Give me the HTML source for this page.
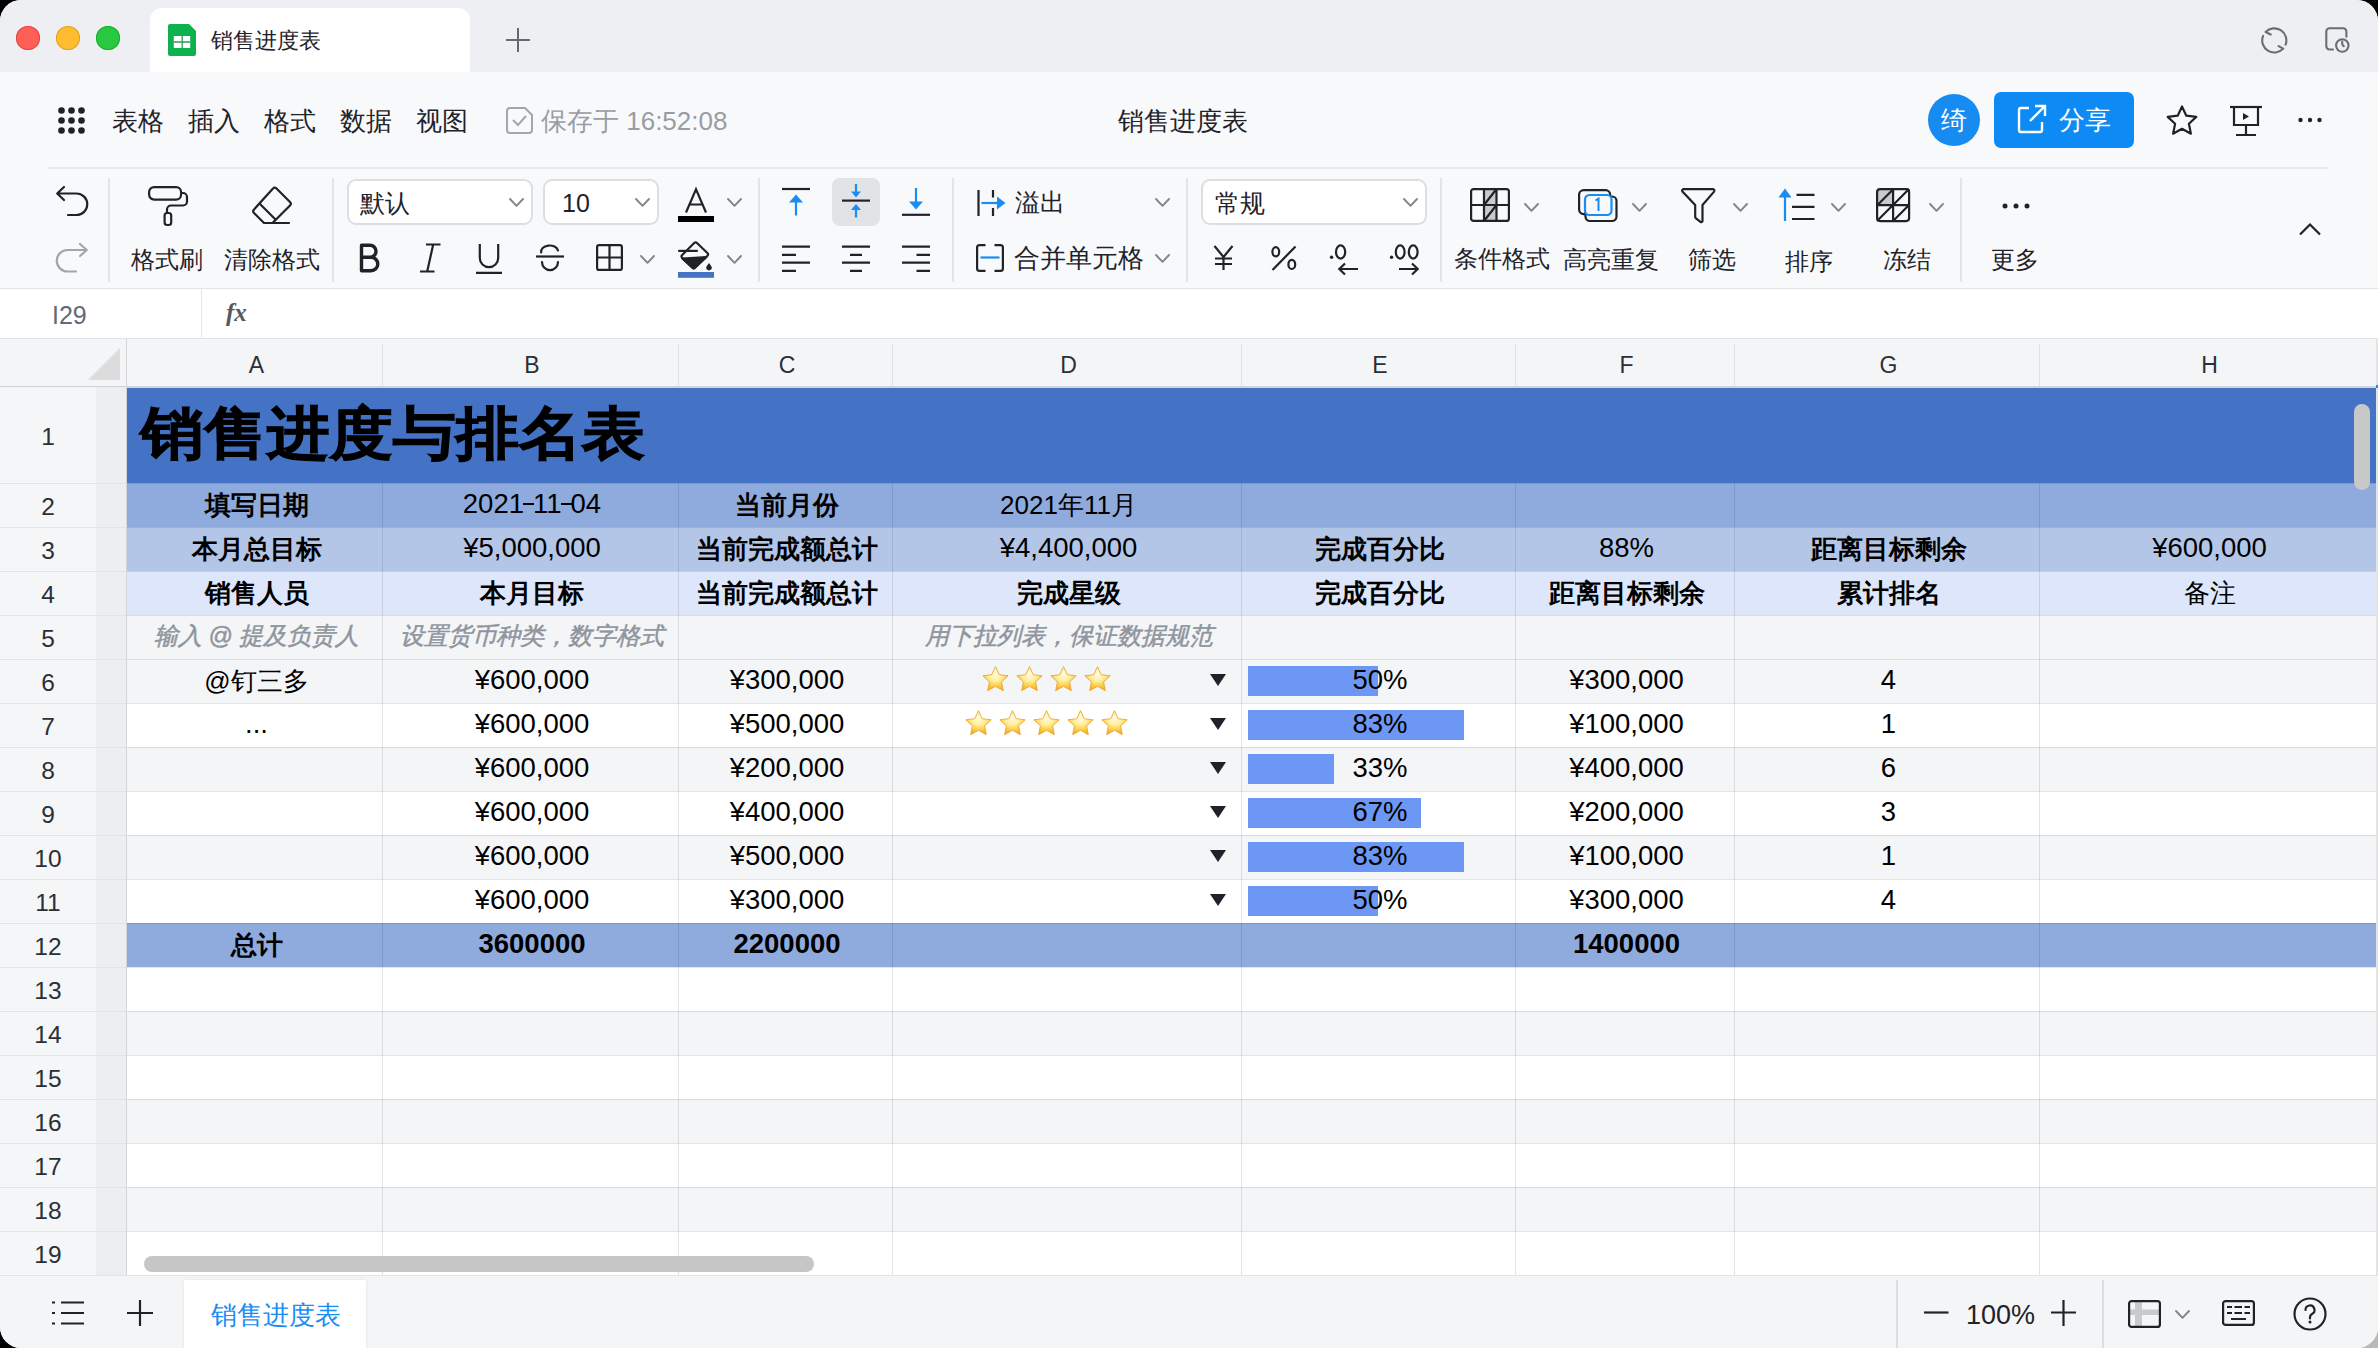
<!DOCTYPE html><html><head><meta charset="utf-8"><style>
*{box-sizing:border-box;margin:0;padding:0}
html,body{width:2378px;height:1348px;overflow:hidden;background:#000}
body{position:relative;font-family:"Liberation Sans",sans-serif;color:#1f2329}
.a{position:absolute}
.t{position:absolute;white-space:nowrap;line-height:1}
svg{position:absolute;overflow:visible}
#win{position:absolute;left:0;top:0;width:2378px;height:1348px;border-radius:21px;overflow:hidden;background:#f8f9fb}
.c{position:absolute;display:flex;align-items:center;justify-content:center;white-space:nowrap;line-height:1;font-size:26px;color:#000}
.b{font-weight:bold}
.vl{position:absolute;width:1px;background:rgba(0,0,0,0.1)}
.hl{position:absolute;height:1px;background:rgba(0,0,0,0.1)}
</style></head><body>
<div class="a" style="right:0;bottom:0;width:30px;height:30px;background:#b9b9b9"></div>
<svg width="0" height="0" style="position:absolute"><defs><radialGradient id="sg" cx="0.5" cy="0.32" r="0.75"><stop offset="0" stop-color="#fffbe0"/><stop offset="0.35" stop-color="#fff1a0"/><stop offset="0.7" stop-color="#fcc63a"/><stop offset="1" stop-color="#f29a12"/></radialGradient></defs></svg>
<div id="win">
<div class="a" style="left:0;top:0;width:2378px;height:72px;background:#eeeff3"></div>
<div class="a" style="left:16px;top:26px;width:24px;height:24px;border-radius:50%;background:#ff5f57;box-shadow:inset 0 0 0 1px #e2463f"></div>
<div class="a" style="left:56px;top:26px;width:24px;height:24px;border-radius:50%;background:#febc2e;box-shadow:inset 0 0 0 1px #e1a325"></div>
<div class="a" style="left:96px;top:26px;width:24px;height:24px;border-radius:50%;background:#28c840;box-shadow:inset 0 0 0 1px #1aab29"></div>
<div class="a" style="left:150px;top:8px;width:320px;height:64px;background:#fff;border-radius:12px 12px 0 0"></div>
<svg style="left:168px;top:24px" width="28" height="32" viewBox="0 0 28 32"><path d="M2 0H21L28 7V30a2 2 0 0 1-2 2H2a2 2 0 0 1-2-2V2a2 2 0 0 1 2-2z" fill="#0db24f"/><rect x="5.8" y="12" width="16.4" height="12" fill="#fff"/><path d="M14.2 12V24M5.8 18H22.2" stroke="#2e9b5a" stroke-width="1.3"/></svg>
<div class="t" style="left:211px;top:30px;font-size:22px;color:#1f2329">销售进度表</div>
<svg style="left:506px;top:28px" width="24" height="24" viewBox="0 0 24 24"><path d="M12 0V24M0 12H24" stroke="#646a73" stroke-width="2"/></svg>
<svg style="left:2250px;top:20px" width="50" height="40" viewBox="2250 20 50 40" fill="none" stroke="#6a6e73" stroke-width="2.1" stroke-linecap="round"><path d="M2265.6 32A12.1 12.1 0 0 1 2285.6 44.7M2283.2 48.65A12.1 12.1 0 0 1 2263.1 35.9M2265.6 32L2270.7 34.5M2283.2 48.65L2278.6 46.1"/></svg>
<svg style="left:2310px;top:20px" width="50" height="40" viewBox="2310 20 50 40" fill="none" stroke="#6a6e73" stroke-width="2.1" stroke-linecap="round"><path d="M2333 49.5H2329.5a3.2 3.2 0 0 1-3.2-3.2V31.4a3.2 3.2 0 0 1 3.2-3.2H2343.2a3.2 3.2 0 0 1 3.2 3.2V36.7"/><circle cx="2342.3" cy="45.5" r="6.2"/><path d="M2342.2 41.5V43.5a3 3 0 0 0 1.6 2.6"/></svg>
<svg style="left:58px;top:107px" width="27" height="27" viewBox="0 0 27 27"><circle cx="3.5" cy="3.5" r="3.3" fill="#1f2329"/><circle cx="3.5" cy="13.5" r="3.3" fill="#1f2329"/><circle cx="3.5" cy="23.5" r="3.3" fill="#1f2329"/><circle cx="13.5" cy="3.5" r="3.3" fill="#1f2329"/><circle cx="13.5" cy="13.5" r="3.3" fill="#1f2329"/><circle cx="13.5" cy="23.5" r="3.3" fill="#1f2329"/><circle cx="23.5" cy="3.5" r="3.3" fill="#1f2329"/><circle cx="23.5" cy="13.5" r="3.3" fill="#1f2329"/><circle cx="23.5" cy="23.5" r="3.3" fill="#1f2329"/></svg>
<div class="t" style="left:112px;top:108px;font-size:26px;color:#1f2329">表格</div>
<div class="t" style="left:188px;top:108px;font-size:26px;color:#1f2329">插入</div>
<div class="t" style="left:264px;top:108px;font-size:26px;color:#1f2329">格式</div>
<div class="t" style="left:340px;top:108px;font-size:26px;color:#1f2329">数据</div>
<div class="t" style="left:416px;top:108px;font-size:26px;color:#1f2329">视图</div>
<svg style="left:506px;top:107px" width="27" height="27" viewBox="0 0 27 27" fill="none" stroke="#a3a6ab" stroke-width="2"><path d="M19 1H4a3 3 0 0 0-3 3v19a3 3 0 0 0 3 3h19a3 3 0 0 0 3-3V8z"/><path d="M7 13l5 5 8-9"/></svg>
<div class="t" style="left:541px;top:108px;font-size:26px;color:#999da3">保存于 16:52:08</div>
<div class="t" style="left:1118px;top:108px;font-size:26px;color:#1f2329">销售进度表</div>
<div class="a" style="left:1928px;top:94px;width:52px;height:52px;border-radius:50%;background:#168bf2"></div>
<div class="t" style="left:1941px;top:107px;font-size:26px;color:#fff">绮</div>
<div class="a" style="left:1994px;top:92px;width:140px;height:56px;border-radius:7px;background:#0d8af3"></div>
<svg style="left:2018px;top:104px" width="29" height="29" viewBox="0 0 29 29" fill="none" stroke="#fff" stroke-width="2.4"><path d="M11 4H3a2 2 0 0 0-2 2v20a2 2 0 0 0 2 2h19a2 2 0 0 0 2-2v-8"/><path d="M12 17L27 2M17 2h10v10"/></svg>
<div class="t" style="left:2059px;top:107px;font-size:26px;color:#fff">分享</div>
<svg style="left:2166px;top:105px" width="32" height="31" viewBox="0 0 32 31" fill="none" stroke="#1f2329" stroke-width="2.2" stroke-linejoin="round"><path d="M16 1.5l4.3 9.2 10 1.2-7.4 6.9 2 9.9L16 23.8l-8.9 4.9 2-9.9L1.7 11.9l10-1.2z"/></svg>
<svg style="left:2230px;top:106px" width="32" height="30" viewBox="0 0 32 30" fill="none" stroke="#1f2329" stroke-width="2.2"><path d="M0 1H32"/><path d="M4 1V19H28V1"/><path d="M16 19V29M6 29H26"/><path d="M13 7l6 3.5-6 3.5z" fill="#1f2329" stroke="none"/></svg>
<svg style="left:2297px;top:117px" width="26" height="6" viewBox="0 0 26 6"><circle cx="3.5" cy="3" r="2.2" fill="#1f2329"/><circle cx="13" cy="3" r="2.2" fill="#1f2329"/><circle cx="22.5" cy="3" r="2.2" fill="#1f2329"/></svg>
<div class="a" style="left:48px;top:167px;width:2281px;height:2px;background:#e9eaed"></div>
<div class="a" style="left:108px;top:178px;width:2px;height:104px;background:#e3e4e7"></div>
<div class="a" style="left:332px;top:178px;width:2px;height:104px;background:#e3e4e7"></div>
<div class="a" style="left:758px;top:178px;width:2px;height:104px;background:#e3e4e7"></div>
<div class="a" style="left:952px;top:178px;width:2px;height:104px;background:#e3e4e7"></div>
<div class="a" style="left:1186px;top:178px;width:2px;height:104px;background:#e3e4e7"></div>
<div class="a" style="left:1440px;top:178px;width:2px;height:104px;background:#e3e4e7"></div>
<div class="a" style="left:1960px;top:178px;width:2px;height:104px;background:#e3e4e7"></div>
<svg style="left:56px;top:186px" width="32" height="30" viewBox="0 0 32 30" fill="none" stroke="#1f2329" stroke-width="2.2" stroke-linecap="round" stroke-linejoin="round"><path d="M8 1L1.2 7.5L8 14M1.2 7.5H20.5A10.75 10.75 0 0 1 20.5 29H12"/></svg>
<svg style="left:56px;top:243px" width="32" height="30" viewBox="0 0 32 30" fill="none" stroke="#a2a5aa" stroke-width="2.2" stroke-linecap="round" stroke-linejoin="round"><path d="M24 1L30.8 7L24 13M30.8 7H11.5A10.75 10.75 0 0 0 11.5 28.5H20"/></svg>
<svg style="left:148px;top:186px" width="40" height="40" viewBox="0 0 40 40" fill="none" stroke="#1f2329" stroke-width="2.2" stroke-linejoin="round"><rect x="1.1" y="1.1" width="32" height="12.5" rx="5"/><path d="M33.1 7H35a4 4 0 0 1 4 4v4.5a4 4 0 0 1-4 4H23a4 4 0 0 0-4 4V27"/><rect x="16.6" y="27" width="6.6" height="12" rx="2.5"/></svg>
<div class="t" style="left:131px;top:248px;font-size:24px;color:#1f2329">格式刷</div>
<svg style="left:252px;top:187px" width="40" height="38" viewBox="0 0 40 38" fill="none" stroke="#1f2329" stroke-width="2.2" stroke-linejoin="round" stroke-linecap="round"><path d="M21 1.5a2.5 2.5 0 0 1 3.5 0L38 15a2.5 2.5 0 0 1 0 3.5L20.5 36H12L2 26a2.5 2.5 0 0 1 0-3.5z"/><path d="M8 17L23 32"/><path d="M20.5 36H37"/></svg>
<div class="t" style="left:224px;top:248px;font-size:24px;color:#1f2329">清除格式</div>
<div class="a" style="left:347px;top:179px;width:186px;height:46px;background:#fff;border:2px solid #dddee1;border-radius:9px"></div>
<div class="a" style="left:543px;top:179px;width:116px;height:46px;background:#fff;border:2px solid #dddee1;border-radius:9px"></div>
<div class="a" style="left:1201px;top:179px;width:226px;height:46px;background:#fff;border:2px solid #dddee1;border-radius:9px"></div>
<div class="t" style="left:360px;top:191px;font-size:25px;color:#1f2329">默认</div>
<svg style="left:509px;top:198px" width="15" height="9" viewBox="0 0 15 9" fill="none" stroke="#80858b" stroke-width="1.9" stroke-linecap="round" stroke-linejoin="round"><path d="M1 1L7.5 7.8L14 1"/></svg>
<div class="t" style="left:562px;top:191px;font-size:25px;color:#1f2329">10</div>
<svg style="left:635px;top:198px" width="15" height="9" viewBox="0 0 15 9" fill="none" stroke="#80858b" stroke-width="1.9" stroke-linecap="round" stroke-linejoin="round"><path d="M1 1L7.5 7.8L14 1"/></svg>
<div class="t" style="left:1215px;top:191px;font-size:25px;color:#1f2329">常规</div>
<svg style="left:1403px;top:198px" width="15" height="9" viewBox="0 0 15 9" fill="none" stroke="#80858b" stroke-width="1.9" stroke-linecap="round" stroke-linejoin="round"><path d="M1 1L7.5 7.8L14 1"/></svg>
<svg style="left:678px;top:188px" width="36" height="34" viewBox="0 0 36 34" fill="none" stroke="#1f2329" stroke-width="2.2"><path d="M8 24.5L18 1.2L28 24.5M11.5 16.5H24.5"/><rect x="0" y="28" width="36" height="6" fill="#000" stroke="none"/></svg>
<svg style="left:727px;top:198px" width="15" height="9" viewBox="0 0 15 9" fill="none" stroke="#80858b" stroke-width="1.9" stroke-linecap="round" stroke-linejoin="round"><path d="M1 1L7.5 7.8L14 1"/></svg>
<svg style="left:359px;top:243px" width="22" height="30" viewBox="0 0 22 30" fill="none" stroke="#1f2329" stroke-width="3.4" stroke-linejoin="round"><path d="M2.5 2.2H11a6 6 0 0 1 0 12H2.5zM2.5 14.2H12a6.8 6.8 0 0 1 0 13.6H2.5z"/></svg>
<svg style="left:420px;top:243px" width="21" height="30" viewBox="0 0 21 30" fill="none" stroke="#1f2329" stroke-width="2.2"><path d="M6 1.5H20.5M0 28.5H14.5M13.2 1.5L7.2 28.5"/></svg>
<svg style="left:476px;top:243px" width="26" height="31" viewBox="0 0 26 31" fill="none" stroke="#1f2329" stroke-width="2.2"><path d="M3.8 1V15a9.2 9.2 0 0 0 18.4 0V1M0 29.8H26"/></svg>
<svg style="left:536px;top:244px" width="28" height="29" viewBox="0 0 28 29" fill="none" stroke="#1f2329" stroke-width="2.2" stroke-linecap="round"><path d="M22 6.5A8.5 6 0 0 0 5.2 8.5"/><path d="M6 18a8 8.2 0 1 0 16 0"/><path d="M0 12.5H28" stroke-linecap="butt"/></svg>
<svg style="left:596px;top:244px" width="27" height="27" viewBox="0 0 27 27" fill="none" stroke="#1f2329" stroke-width="2.2"><rect x="1.1" y="1.1" width="24.8" height="24.8" rx="2"/><path d="M13.5 1V26M1 13.5H26"/></svg>
<svg style="left:640px;top:255px" width="15" height="9" viewBox="0 0 15 9" fill="none" stroke="#80858b" stroke-width="1.9" stroke-linecap="round" stroke-linejoin="round"><path d="M1 1L7.5 7.8L14 1"/></svg>
<svg style="left:678px;top:240px" width="36" height="38" viewBox="0 0 36 38" fill="none" stroke="#1f2329" stroke-width="2.2" stroke-linejoin="round"><path d="M0.2 10.9H19.8"/><path d="M16.2 3a2 2 0 0 1 2.8 0L29.4 13a2 2 0 0 1 0 2.8L17.1 27.6a2 2 0 0 1-2.8 0L4.2 17.9a2 2 0 0 1 0-2.8z"/><path d="M4.5 18.6L28.3 17.2L15.7 28.5z" fill="#1f2329"/><path d="M31 23c-1.6 2.2-2.8 3.3-2.8 4.6a2.8 2.8 0 0 0 5.6 0c0-1.3-1.2-2.4-2.8-4.6z" fill="#1f2329" stroke="none"/><rect x="0" y="32" width="36" height="5.8" fill="#4472c4" stroke="none"/></svg>
<svg style="left:727px;top:255px" width="15" height="9" viewBox="0 0 15 9" fill="none" stroke="#80858b" stroke-width="1.9" stroke-linecap="round" stroke-linejoin="round"><path d="M1 1L7.5 7.8L14 1"/></svg>
<div class="a" style="left:832px;top:178px;width:48px;height:48px;border-radius:8px;background:#e2e3e6"></div>
<svg style="left:782px;top:184px" width="150" height="40" viewBox="0 0 150 40" fill="none" stroke-width="2.2"><path d="M0 5H28" stroke="#1f2329"/><path d="M14 17V31.5" stroke="#1a8cf2"/><path d="M7 18.5L14 10.5L21 18.5z" fill="#1a8cf2" /><path d="M60 16.6H88" stroke="#1f2329"/><path d="M74 0V8.5M74 23V33.5" stroke="#1a8cf2"/><path d="M69 7.5L74 13.5L79 7.5zM69 26L74 20L79 26z" fill="#1a8cf2"/><path d="M120 30.8H148" stroke="#1f2329"/><path d="M134 4V18" stroke="#1a8cf2"/><path d="M127 17.5L134 25.5L141 17.5z" fill="#1a8cf2"/></svg>
<svg style="left:782px;top:240px" width="150" height="34" viewBox="782 0 150 34" fill="none" stroke="#1f2329" stroke-width="2.2"><path d="M782 6.599999999999994H810M782 14.800000000000011H796M782 22.69999999999999H810M782 30.899999999999977H796M842 6.599999999999994H870M850 14.800000000000011H862M842 22.69999999999999H870M850 30.899999999999977H862M902 6.599999999999994H930M916.5 14.800000000000011H930M902 22.69999999999999H930M916.5 30.899999999999977H930"/></svg>
<svg style="left:977px;top:190px" width="30" height="27" viewBox="0 0 30 27" fill="none" stroke-width="2.2"><path d="M1.5 0V26" stroke="#1f2329"/><path d="M16 0V7.5M16 18V26" stroke="#1f2329"/><path d="M4.5 13H22" stroke="#1a8cf2"/><path d="M20 6.5L28.5 13L20 19.5z" fill="#1a8cf2"/></svg>
<div class="t" style="left:1015px;top:190px;font-size:25px;color:#1f2329">溢出</div>
<svg style="left:1155px;top:198px" width="15" height="9" viewBox="0 0 15 9" fill="none" stroke="#80858b" stroke-width="1.9" stroke-linecap="round" stroke-linejoin="round"><path d="M1 1L7.5 7.8L14 1"/></svg>
<svg style="left:976px;top:244px" width="28" height="28" viewBox="0 0 28 28" fill="none" stroke-width="2.2"><path d="M9.5 1.1H3.5a2.4 2.4 0 0 0-2.4 2.4V24.5a2.4 2.4 0 0 0 2.4 2.4H9.5M18.5 1.1H24.5a2.4 2.4 0 0 1 2.4 2.4V24.5a2.4 2.4 0 0 1-2.4 2.4H18.5" stroke="#1f2329"/><path d="M4.5 13.5H23.5" stroke="#1a8cf2"/></svg>
<div class="t" style="left:1014px;top:246px;font-size:25.5px;color:#1f2329">合并单元格</div>
<svg style="left:1155px;top:254px" width="15" height="9" viewBox="0 0 15 9" fill="none" stroke="#80858b" stroke-width="1.9" stroke-linecap="round" stroke-linejoin="round"><path d="M1 1L7.5 7.8L14 1"/></svg>
<svg style="left:1213px;top:245px" width="21" height="26" viewBox="0 0 21 26" fill="none" stroke="#1f2329" stroke-width="2.2"><path d="M1.5 1L10.5 12L19.5 1M10.5 12V25M2 13.5H19M2 19H19"/></svg>
<svg style="left:1271px;top:245px" width="26" height="26" viewBox="0 0 26 26" fill="none" stroke="#1f2329" stroke-width="2.2"><ellipse cx="4.8" cy="6.8" rx="3.4" ry="4.6"/><ellipse cx="20.8" cy="19.4" rx="3.4" ry="4.6"/><path d="M24.5 1.5L1.5 25"/></svg>
<svg style="left:1329px;top:244px" width="31" height="32" viewBox="0 0 31 32" fill="none" stroke="#1f2329" stroke-width="2.2"><circle cx="2.6" cy="13.2" r="1.7" fill="#1f2329" stroke="none"/><ellipse cx="11.6" cy="8" rx="4.6" ry="6.6"/><path d="M10 25H29M16 19.5L10.3 25L16 30.5"/></svg>
<svg style="left:1389px;top:244px" width="31" height="32" viewBox="0 0 31 32" fill="none" stroke="#1f2329" stroke-width="2.2"><circle cx="2.6" cy="13.2" r="1.7" fill="#1f2329" stroke="none"/><ellipse cx="11.2" cy="8" rx="4.4" ry="6.6"/><ellipse cx="24.2" cy="8" rx="4.4" ry="6.6"/><path d="M10 25H28.5M23 19.5L28.7 25L23 30.5"/></svg>
<svg style="left:1470px;top:188px" width="40" height="34" viewBox="0 0 40 34" fill="none" stroke="#1f2329" stroke-width="2.2"><rect x="14" y="1.5" width="12.5" height="31" fill="#c9cacc" stroke="none"/><rect x="1.1" y="1.1" width="37.8" height="31.8" rx="2.5"/><path d="M14 1V33M26.5 1V33M1 17H39M14 33L26.5 17M14 17L26.5 1"/></svg>
<svg style="left:1524px;top:203px" width="15" height="9" viewBox="0 0 15 9" fill="none" stroke="#80858b" stroke-width="1.9" stroke-linecap="round" stroke-linejoin="round"><path d="M1 1L7.5 7.8L14 1"/></svg>
<div class="t" style="left:1454px;top:247px;font-size:24px;color:#1f2329">条件格式</div>
<svg style="left:1578px;top:189px" width="40" height="33" viewBox="0 0 40 33" fill="none" stroke-width="2.2"><rect x="1.1" y="1.1" width="31" height="24" rx="4.5" stroke="#1f2329"/><rect x="7.5" y="7.5" width="31" height="24.5" rx="4.5" stroke="#1f2329" fill="#f8f9fb"/><rect x="7" y="6" width="26.5" height="20" rx="4.5" stroke="#1a8cf2" fill="#f8f9fb"/><path d="M17.5 11.5L20.5 9.5V22" stroke="#1a8cf2" stroke-width="2"/></svg>
<svg style="left:1632px;top:203px" width="15" height="9" viewBox="0 0 15 9" fill="none" stroke="#80858b" stroke-width="1.9" stroke-linecap="round" stroke-linejoin="round"><path d="M1 1L7.5 7.8L14 1"/></svg>
<div class="t" style="left:1563px;top:248px;font-size:24px;color:#1f2329">高亮重复</div>
<svg style="left:1681px;top:188px" width="35" height="36" viewBox="0 0 35 36" fill="none" stroke="#1f2329" stroke-width="2.2" stroke-linejoin="round"><path d="M2.5 1.2H32a1.5 1.5 0 0 1 1.1 2.4L21.5 17V33a1.2 1.2 0 0 1-2 .9l-4.5-3.5a2 2 0 0 1-.8-1.6V17L1.4 3.6A1.5 1.5 0 0 1 2.5 1.2z"/></svg>
<svg style="left:1733px;top:203px" width="15" height="9" viewBox="0 0 15 9" fill="none" stroke="#80858b" stroke-width="1.9" stroke-linecap="round" stroke-linejoin="round"><path d="M1 1L7.5 7.8L14 1"/></svg>
<div class="t" style="left:1688px;top:248px;font-size:24px;color:#1f2329">筛选</div>
<svg style="left:1778px;top:188px" width="38" height="34" viewBox="0 0 38 34" fill="none" stroke-width="2.2"><path d="M7 8V33" stroke="#1a8cf2"/><path d="M0.5 9.5L7 0.5L13.5 9.5z" fill="#1a8cf2"/><path d="M18.5 6.8H36.5M14 18.8H36.5M14 31H36.5" stroke="#1f2329"/></svg>
<svg style="left:1831px;top:203px" width="15" height="9" viewBox="0 0 15 9" fill="none" stroke="#80858b" stroke-width="1.9" stroke-linecap="round" stroke-linejoin="round"><path d="M1 1L7.5 7.8L14 1"/></svg>
<div class="t" style="left:1785px;top:250px;font-size:24px;color:#1f2329">排序</div>
<svg style="left:1876px;top:188px" width="35" height="35" viewBox="0 0 35 35" fill="none" stroke="#1f2329" stroke-width="2.2"><path d="M2 2H17.5V17.5H2z" fill="#c9cacc" stroke="none"/><rect x="1.1" y="1.1" width="32" height="32" rx="3"/><path d="M17.1 1V33M1 17.1H33M1 33L17 17M1 17.5L17.5 1M17.1 17.1L33 1M17.1 33L33 17"/></svg>
<svg style="left:1929px;top:203px" width="15" height="9" viewBox="0 0 15 9" fill="none" stroke="#80858b" stroke-width="1.9" stroke-linecap="round" stroke-linejoin="round"><path d="M1 1L7.5 7.8L14 1"/></svg>
<div class="t" style="left:1883px;top:248px;font-size:24px;color:#1f2329">冻结</div>
<svg style="left:2002px;top:203px" width="28" height="6" viewBox="0 0 28 6"><circle cx="3" cy="3" r="2.5" fill="#1f2329"/><circle cx="14" cy="3" r="2.5" fill="#1f2329"/><circle cx="25" cy="3" r="2.5" fill="#1f2329"/></svg>
<div class="t" style="left:1991px;top:248px;font-size:24px;color:#1f2329">更多</div>
<svg style="left:2299px;top:223px" width="22" height="13" viewBox="0 0 22 13" fill="none" stroke="#1f2329" stroke-width="2.2"><path d="M1 11.5L11 1.5L21 11.5"/></svg>
<div class="a" style="left:0;top:288px;width:2378px;height:1px;background:#e3e4e7"></div>
<div class="a" style="left:0;top:289px;width:2378px;height:49px;background:#fff"></div>
<div class="a" style="left:201px;top:289px;width:1px;height:49px;background:#e6e7ea"></div>
<div class="t" style="left:52px;top:303px;font-size:25px;color:#646a73">I29</div>
<div class="t" style="left:226px;top:300px;font-size:25px;font-weight:bold;font-style:italic;color:#55595f;font-family:'Liberation Serif',serif">fx</div>
<div class="a" style="left:0;top:338px;width:2378px;height:1px;background:#e1e3e6"></div>
<div class="a" style="left:0;top:339px;width:2378px;height:47px;background:#f4f5f7"></div>
<svg style="left:88px;top:348px" width="32" height="32" viewBox="0 0 32 32"><path d="M32 0V32H0z" fill="#dcdcdc"/></svg>
<div class="c" style="left:129px;top:342px;width:255px;height:47px;font-size:23px;color:#2b2f36">A</div>
<div class="c" style="left:384px;top:342px;width:296px;height:47px;font-size:23px;color:#2b2f36">B</div>
<div class="c" style="left:680px;top:342px;width:214px;height:47px;font-size:23px;color:#2b2f36">C</div>
<div class="c" style="left:894px;top:342px;width:349px;height:47px;font-size:23px;color:#2b2f36">D</div>
<div class="c" style="left:1243px;top:342px;width:274px;height:47px;font-size:23px;color:#2b2f36">E</div>
<div class="c" style="left:1517px;top:342px;width:219px;height:47px;font-size:23px;color:#2b2f36">F</div>
<div class="c" style="left:1736px;top:342px;width:305px;height:47px;font-size:23px;color:#2b2f36">G</div>
<div class="c" style="left:2041px;top:342px;width:337px;height:47px;font-size:23px;color:#2b2f36">H</div>
<div class="a" style="left:382px;top:344px;width:1px;height:42px;background:#dfe1e4"></div>
<div class="a" style="left:678px;top:344px;width:1px;height:42px;background:#dfe1e4"></div>
<div class="a" style="left:892px;top:344px;width:1px;height:42px;background:#dfe1e4"></div>
<div class="a" style="left:1241px;top:344px;width:1px;height:42px;background:#dfe1e4"></div>
<div class="a" style="left:1515px;top:344px;width:1px;height:42px;background:#dfe1e4"></div>
<div class="a" style="left:1734px;top:344px;width:1px;height:42px;background:#dfe1e4"></div>
<div class="a" style="left:2039px;top:344px;width:1px;height:42px;background:#dfe1e4"></div>
<div class="a" style="left:0;top:386px;width:2378px;height:1px;background:#cfd2d6"></div>
<div class="a" style="left:0;top:387px;width:96px;height:888px;background:#f5f6f8"></div>
<div class="a" style="left:96px;top:387px;width:30px;height:888px;background:#edeef1"></div>
<div class="a" style="left:126px;top:339px;width:1px;height:936px;background:#d3d5d9"></div>
<div class="c" style="left:0;top:389px;width:96px;height:96px;font-size:24.5px;color:#2b2f36">1</div>
<div class="a" style="left:0;top:483px;width:126px;height:1px;background:#e2e3e6"></div>
<div class="c" style="left:0;top:485px;width:96px;height:44px;font-size:24.5px;color:#2b2f36">2</div>
<div class="a" style="left:0;top:527px;width:126px;height:1px;background:#e2e3e6"></div>
<div class="c" style="left:0;top:529px;width:96px;height:44px;font-size:24.5px;color:#2b2f36">3</div>
<div class="a" style="left:0;top:571px;width:126px;height:1px;background:#e2e3e6"></div>
<div class="c" style="left:0;top:573px;width:96px;height:44px;font-size:24.5px;color:#2b2f36">4</div>
<div class="a" style="left:0;top:615px;width:126px;height:1px;background:#e2e3e6"></div>
<div class="c" style="left:0;top:617px;width:96px;height:44px;font-size:24.5px;color:#2b2f36">5</div>
<div class="a" style="left:0;top:659px;width:126px;height:1px;background:#e2e3e6"></div>
<div class="c" style="left:0;top:661px;width:96px;height:44px;font-size:24.5px;color:#2b2f36">6</div>
<div class="a" style="left:0;top:703px;width:126px;height:1px;background:#e2e3e6"></div>
<div class="c" style="left:0;top:705px;width:96px;height:44px;font-size:24.5px;color:#2b2f36">7</div>
<div class="a" style="left:0;top:747px;width:126px;height:1px;background:#e2e3e6"></div>
<div class="c" style="left:0;top:749px;width:96px;height:44px;font-size:24.5px;color:#2b2f36">8</div>
<div class="a" style="left:0;top:791px;width:126px;height:1px;background:#e2e3e6"></div>
<div class="c" style="left:0;top:793px;width:96px;height:44px;font-size:24.5px;color:#2b2f36">9</div>
<div class="a" style="left:0;top:835px;width:126px;height:1px;background:#e2e3e6"></div>
<div class="c" style="left:0;top:837px;width:96px;height:44px;font-size:24.5px;color:#2b2f36">10</div>
<div class="a" style="left:0;top:879px;width:126px;height:1px;background:#e2e3e6"></div>
<div class="c" style="left:0;top:881px;width:96px;height:44px;font-size:24.5px;color:#2b2f36">11</div>
<div class="a" style="left:0;top:923px;width:126px;height:1px;background:#e2e3e6"></div>
<div class="c" style="left:0;top:925px;width:96px;height:44px;font-size:24.5px;color:#2b2f36">12</div>
<div class="a" style="left:0;top:967px;width:126px;height:1px;background:#e2e3e6"></div>
<div class="c" style="left:0;top:969px;width:96px;height:44px;font-size:24.5px;color:#2b2f36">13</div>
<div class="a" style="left:0;top:1011px;width:126px;height:1px;background:#e2e3e6"></div>
<div class="c" style="left:0;top:1013px;width:96px;height:44px;font-size:24.5px;color:#2b2f36">14</div>
<div class="a" style="left:0;top:1055px;width:126px;height:1px;background:#e2e3e6"></div>
<div class="c" style="left:0;top:1057px;width:96px;height:44px;font-size:24.5px;color:#2b2f36">15</div>
<div class="a" style="left:0;top:1099px;width:126px;height:1px;background:#e2e3e6"></div>
<div class="c" style="left:0;top:1101px;width:96px;height:44px;font-size:24.5px;color:#2b2f36">16</div>
<div class="a" style="left:0;top:1143px;width:126px;height:1px;background:#e2e3e6"></div>
<div class="c" style="left:0;top:1145px;width:96px;height:44px;font-size:24.5px;color:#2b2f36">17</div>
<div class="a" style="left:0;top:1187px;width:126px;height:1px;background:#e2e3e6"></div>
<div class="c" style="left:0;top:1189px;width:96px;height:44px;font-size:24.5px;color:#2b2f36">18</div>
<div class="a" style="left:0;top:1231px;width:126px;height:1px;background:#e2e3e6"></div>
<div class="c" style="left:0;top:1233px;width:96px;height:44px;font-size:24.5px;color:#2b2f36">19</div>
<div class="a" style="left:0;top:1275px;width:126px;height:1px;background:#e2e3e6"></div>
<div class="a" style="left:127px;top:387px;width:2249px;height:96px;background:#4472c4"></div>
<div class="a" style="left:127px;top:387px;width:2249px;height:1px;background:#c9d5ec"></div>
<div class="a" style="left:127px;top:483px;width:2249px;height:44px;background:#8faadc"></div>
<div class="a" style="left:127px;top:527px;width:2249px;height:44px;background:#b4c6e7"></div>
<div class="a" style="left:127px;top:571px;width:2249px;height:44px;background:#dde6fa"></div>
<div class="a" style="left:127px;top:615px;width:2249px;height:44px;background:#f4f5f7"></div>
<div class="a" style="left:127px;top:659px;width:2249px;height:44px;background:#f4f5f7"></div>
<div class="a" style="left:127px;top:703px;width:2249px;height:44px;background:#ffffff"></div>
<div class="a" style="left:127px;top:747px;width:2249px;height:44px;background:#f4f5f7"></div>
<div class="a" style="left:127px;top:791px;width:2249px;height:44px;background:#ffffff"></div>
<div class="a" style="left:127px;top:835px;width:2249px;height:44px;background:#f4f5f7"></div>
<div class="a" style="left:127px;top:879px;width:2249px;height:44px;background:#ffffff"></div>
<div class="a" style="left:127px;top:923px;width:2249px;height:44px;background:#f4f5f7"></div>
<div class="a" style="left:127px;top:967px;width:2249px;height:44px;background:#ffffff"></div>
<div class="a" style="left:127px;top:1011px;width:2249px;height:44px;background:#f4f5f7"></div>
<div class="a" style="left:127px;top:1055px;width:2249px;height:44px;background:#ffffff"></div>
<div class="a" style="left:127px;top:1099px;width:2249px;height:44px;background:#f4f5f7"></div>
<div class="a" style="left:127px;top:1143px;width:2249px;height:44px;background:#ffffff"></div>
<div class="a" style="left:127px;top:1187px;width:2249px;height:44px;background:#f4f5f7"></div>
<div class="a" style="left:127px;top:1231px;width:2249px;height:44px;background:#ffffff"></div>
<div class="a" style="left:127px;top:923px;width:2249px;height:44px;background:#8faadc"></div>
<div class="a" style="left:1248px;top:666px;width:130px;height:30px;background:#6d97f4"></div>
<div class="a" style="left:1248px;top:710px;width:216px;height:30px;background:#6d97f4"></div>
<div class="a" style="left:1248px;top:754px;width:86px;height:30px;background:#6d97f4"></div>
<div class="a" style="left:1248px;top:798px;width:173px;height:30px;background:#6d97f4"></div>
<div class="a" style="left:1248px;top:842px;width:216px;height:30px;background:#6d97f4"></div>
<div class="a" style="left:1248px;top:886px;width:130px;height:30px;background:#6d97f4"></div>
<div class="hl" style="left:127px;top:483px;width:2249px"></div>
<div class="hl" style="left:127px;top:527px;width:2249px"></div>
<div class="hl" style="left:127px;top:571px;width:2249px"></div>
<div class="hl" style="left:127px;top:615px;width:2249px"></div>
<div class="hl" style="left:127px;top:659px;width:2249px"></div>
<div class="hl" style="left:127px;top:703px;width:2249px"></div>
<div class="hl" style="left:127px;top:747px;width:2249px"></div>
<div class="hl" style="left:127px;top:791px;width:2249px"></div>
<div class="hl" style="left:127px;top:835px;width:2249px"></div>
<div class="hl" style="left:127px;top:879px;width:2249px"></div>
<div class="hl" style="left:127px;top:923px;width:2249px"></div>
<div class="hl" style="left:127px;top:967px;width:2249px"></div>
<div class="hl" style="left:127px;top:1011px;width:2249px"></div>
<div class="hl" style="left:127px;top:1055px;width:2249px"></div>
<div class="hl" style="left:127px;top:1099px;width:2249px"></div>
<div class="hl" style="left:127px;top:1143px;width:2249px"></div>
<div class="hl" style="left:127px;top:1187px;width:2249px"></div>
<div class="hl" style="left:127px;top:1231px;width:2249px"></div>
<div class="hl" style="left:127px;top:1275px;width:2249px"></div>
<div class="vl" style="left:382px;top:483px;height:792px"></div>
<div class="vl" style="left:678px;top:483px;height:792px"></div>
<div class="vl" style="left:892px;top:483px;height:792px"></div>
<div class="vl" style="left:1241px;top:483px;height:792px"></div>
<div class="vl" style="left:1515px;top:483px;height:792px"></div>
<div class="vl" style="left:1734px;top:483px;height:792px"></div>
<div class="vl" style="left:2039px;top:483px;height:792px"></div>
<div class="a" style="left:2376px;top:339px;width:2px;height:936px;background:#e3e4e7"></div>
<div class="t" style="left:141px;top:402px;font-size:63px;font-weight:bold;color:#000;-webkit-text-stroke:1.2px #000;transform:scaleY(0.91);transform-origin:0 30px">销售进度与排名表</div>
<div class="c" style="left:129px;top:483px;width:255px;height:44px;font-weight:bold;">填写日期</div>
<div class="c" style="left:384px;top:482px;width:296px;height:44px;font-size:27.5px;">2021<span style="margin:0 -1px;display:inline-block;width:11px;height:2.2px;background:#000;vertical-align:6px"></span>11<span style="margin:0 -1px;display:inline-block;width:11px;height:2.2px;background:#000;vertical-align:6px"></span>04</div>
<div class="c" style="left:680px;top:483px;width:214px;height:44px;font-weight:bold;">当前月份</div>
<div class="c" style="left:894px;top:483px;width:349px;height:44px;">2021年11月</div>
<div class="c" style="left:129px;top:527px;width:255px;height:44px;font-weight:bold;">本月总目标</div>
<div class="c" style="left:384px;top:526px;width:296px;height:44px;font-size:27.5px;">¥5,000,000</div>
<div class="c" style="left:680px;top:527px;width:214px;height:44px;font-weight:bold;">当前完成额总计</div>
<div class="c" style="left:894px;top:526px;width:349px;height:44px;font-size:27.5px;">¥4,400,000</div>
<div class="c" style="left:1243px;top:527px;width:274px;height:44px;font-weight:bold;">完成百分比</div>
<div class="c" style="left:1517px;top:526px;width:219px;height:44px;font-size:27.5px;">88%</div>
<div class="c" style="left:1736px;top:527px;width:305px;height:44px;font-weight:bold;">距离目标剩余</div>
<div class="c" style="left:2041px;top:526px;width:337px;height:44px;font-size:27.5px;">¥600,000</div>
<div class="c" style="left:129px;top:571px;width:255px;height:44px;font-weight:bold;">销售人员</div>
<div class="c" style="left:384px;top:571px;width:296px;height:44px;font-weight:bold;">本月目标</div>
<div class="c" style="left:680px;top:571px;width:214px;height:44px;font-weight:bold;">当前完成额总计</div>
<div class="c" style="left:894px;top:571px;width:349px;height:44px;font-weight:bold;">完成星级</div>
<div class="c" style="left:1243px;top:571px;width:274px;height:44px;font-weight:bold;">完成百分比</div>
<div class="c" style="left:1517px;top:571px;width:219px;height:44px;font-weight:bold;">距离目标剩余</div>
<div class="c" style="left:1736px;top:571px;width:305px;height:44px;font-weight:bold;">累计排名</div>
<div class="c" style="left:2041px;top:571px;width:337px;height:44px;">备注</div>
<div class="c" style="left:129px;top:615px;width:255px;height:44px;font-style:italic;color:#8f959e;font-size:24px;-webkit-text-stroke:0.5px #8f959e;padding-bottom:2px;">输入 @ 提及负责人</div>
<div class="c" style="left:384px;top:615px;width:296px;height:44px;font-style:italic;color:#8f959e;font-size:24px;-webkit-text-stroke:0.5px #8f959e;padding-bottom:2px;">设置货币种类，数字格式</div>
<div class="c" style="left:894px;top:615px;width:349px;height:44px;font-style:italic;color:#8f959e;font-size:24px;-webkit-text-stroke:0.5px #8f959e;padding-bottom:2px;">用下拉列表，保证数据规范</div>
<div class="c" style="left:129px;top:659px;width:255px;height:44px;">@钉三多</div>
<div class="c" style="left:384px;top:658px;width:296px;height:44px;font-size:27.5px;">¥600,000</div>
<div class="c" style="left:680px;top:658px;width:214px;height:44px;font-size:27.5px;">¥300,000</div>
<div class="c" style="left:1243px;top:658px;width:274px;height:44px;font-size:27.5px;">50%</div>
<div class="c" style="left:1517px;top:658px;width:219px;height:44px;font-size:27.5px;">¥300,000</div>
<div class="c" style="left:1736px;top:658px;width:305px;height:44px;font-size:27.5px;">4</div>
<div class="c" style="left:892px;top:657px;width:308px;height:44px"><svg width="27" height="26" viewBox="0 0 27 26" style="position:static;margin:0 3.5px"><path d="M13.50 0.60L17.26 8.72L26.15 9.79L19.59 15.88L21.32 24.66L13.50 20.30L5.68 24.66L7.41 15.88L0.85 9.79L9.74 8.72z" fill="url(#sg)" stroke="#eaa53a" stroke-width="0.9" stroke-linejoin="round"/></svg><svg width="27" height="26" viewBox="0 0 27 26" style="position:static;margin:0 3.5px"><path d="M13.50 0.60L17.26 8.72L26.15 9.79L19.59 15.88L21.32 24.66L13.50 20.30L5.68 24.66L7.41 15.88L0.85 9.79L9.74 8.72z" fill="url(#sg)" stroke="#eaa53a" stroke-width="0.9" stroke-linejoin="round"/></svg><svg width="27" height="26" viewBox="0 0 27 26" style="position:static;margin:0 3.5px"><path d="M13.50 0.60L17.26 8.72L26.15 9.79L19.59 15.88L21.32 24.66L13.50 20.30L5.68 24.66L7.41 15.88L0.85 9.79L9.74 8.72z" fill="url(#sg)" stroke="#eaa53a" stroke-width="0.9" stroke-linejoin="round"/></svg><svg width="27" height="26" viewBox="0 0 27 26" style="position:static;margin:0 3.5px"><path d="M13.50 0.60L17.26 8.72L26.15 9.79L19.59 15.88L21.32 24.66L13.50 20.30L5.68 24.66L7.41 15.88L0.85 9.79L9.74 8.72z" fill="url(#sg)" stroke="#eaa53a" stroke-width="0.9" stroke-linejoin="round"/></svg></div>
<svg style="left:1210px;top:674px" width="16" height="12" viewBox="0 0 16 12"><path d="M0 0H16L8 12z" fill="#1f2329"/></svg>
<div class="c" style="left:129px;top:702px;width:255px;height:44px;font-size:27.5px;">...</div>
<div class="c" style="left:384px;top:702px;width:296px;height:44px;font-size:27.5px;">¥600,000</div>
<div class="c" style="left:680px;top:702px;width:214px;height:44px;font-size:27.5px;">¥500,000</div>
<div class="c" style="left:1243px;top:702px;width:274px;height:44px;font-size:27.5px;">83%</div>
<div class="c" style="left:1517px;top:702px;width:219px;height:44px;font-size:27.5px;">¥100,000</div>
<div class="c" style="left:1736px;top:702px;width:305px;height:44px;font-size:27.5px;">1</div>
<div class="c" style="left:892px;top:701px;width:308px;height:44px"><svg width="27" height="26" viewBox="0 0 27 26" style="position:static;margin:0 3.5px"><path d="M13.50 0.60L17.26 8.72L26.15 9.79L19.59 15.88L21.32 24.66L13.50 20.30L5.68 24.66L7.41 15.88L0.85 9.79L9.74 8.72z" fill="url(#sg)" stroke="#eaa53a" stroke-width="0.9" stroke-linejoin="round"/></svg><svg width="27" height="26" viewBox="0 0 27 26" style="position:static;margin:0 3.5px"><path d="M13.50 0.60L17.26 8.72L26.15 9.79L19.59 15.88L21.32 24.66L13.50 20.30L5.68 24.66L7.41 15.88L0.85 9.79L9.74 8.72z" fill="url(#sg)" stroke="#eaa53a" stroke-width="0.9" stroke-linejoin="round"/></svg><svg width="27" height="26" viewBox="0 0 27 26" style="position:static;margin:0 3.5px"><path d="M13.50 0.60L17.26 8.72L26.15 9.79L19.59 15.88L21.32 24.66L13.50 20.30L5.68 24.66L7.41 15.88L0.85 9.79L9.74 8.72z" fill="url(#sg)" stroke="#eaa53a" stroke-width="0.9" stroke-linejoin="round"/></svg><svg width="27" height="26" viewBox="0 0 27 26" style="position:static;margin:0 3.5px"><path d="M13.50 0.60L17.26 8.72L26.15 9.79L19.59 15.88L21.32 24.66L13.50 20.30L5.68 24.66L7.41 15.88L0.85 9.79L9.74 8.72z" fill="url(#sg)" stroke="#eaa53a" stroke-width="0.9" stroke-linejoin="round"/></svg><svg width="27" height="26" viewBox="0 0 27 26" style="position:static;margin:0 3.5px"><path d="M13.50 0.60L17.26 8.72L26.15 9.79L19.59 15.88L21.32 24.66L13.50 20.30L5.68 24.66L7.41 15.88L0.85 9.79L9.74 8.72z" fill="url(#sg)" stroke="#eaa53a" stroke-width="0.9" stroke-linejoin="round"/></svg></div>
<svg style="left:1210px;top:718px" width="16" height="12" viewBox="0 0 16 12"><path d="M0 0H16L8 12z" fill="#1f2329"/></svg>
<div class="c" style="left:129px;top:746px;width:255px;height:44px;font-size:27.5px;"></div>
<div class="c" style="left:384px;top:746px;width:296px;height:44px;font-size:27.5px;">¥600,000</div>
<div class="c" style="left:680px;top:746px;width:214px;height:44px;font-size:27.5px;">¥200,000</div>
<div class="c" style="left:1243px;top:746px;width:274px;height:44px;font-size:27.5px;">33%</div>
<div class="c" style="left:1517px;top:746px;width:219px;height:44px;font-size:27.5px;">¥400,000</div>
<div class="c" style="left:1736px;top:746px;width:305px;height:44px;font-size:27.5px;">6</div>
<svg style="left:1210px;top:762px" width="16" height="12" viewBox="0 0 16 12"><path d="M0 0H16L8 12z" fill="#1f2329"/></svg>
<div class="c" style="left:129px;top:790px;width:255px;height:44px;font-size:27.5px;"></div>
<div class="c" style="left:384px;top:790px;width:296px;height:44px;font-size:27.5px;">¥600,000</div>
<div class="c" style="left:680px;top:790px;width:214px;height:44px;font-size:27.5px;">¥400,000</div>
<div class="c" style="left:1243px;top:790px;width:274px;height:44px;font-size:27.5px;">67%</div>
<div class="c" style="left:1517px;top:790px;width:219px;height:44px;font-size:27.5px;">¥200,000</div>
<div class="c" style="left:1736px;top:790px;width:305px;height:44px;font-size:27.5px;">3</div>
<svg style="left:1210px;top:806px" width="16" height="12" viewBox="0 0 16 12"><path d="M0 0H16L8 12z" fill="#1f2329"/></svg>
<div class="c" style="left:129px;top:834px;width:255px;height:44px;font-size:27.5px;"></div>
<div class="c" style="left:384px;top:834px;width:296px;height:44px;font-size:27.5px;">¥600,000</div>
<div class="c" style="left:680px;top:834px;width:214px;height:44px;font-size:27.5px;">¥500,000</div>
<div class="c" style="left:1243px;top:834px;width:274px;height:44px;font-size:27.5px;">83%</div>
<div class="c" style="left:1517px;top:834px;width:219px;height:44px;font-size:27.5px;">¥100,000</div>
<div class="c" style="left:1736px;top:834px;width:305px;height:44px;font-size:27.5px;">1</div>
<svg style="left:1210px;top:850px" width="16" height="12" viewBox="0 0 16 12"><path d="M0 0H16L8 12z" fill="#1f2329"/></svg>
<div class="c" style="left:129px;top:878px;width:255px;height:44px;font-size:27.5px;"></div>
<div class="c" style="left:384px;top:878px;width:296px;height:44px;font-size:27.5px;">¥600,000</div>
<div class="c" style="left:680px;top:878px;width:214px;height:44px;font-size:27.5px;">¥300,000</div>
<div class="c" style="left:1243px;top:878px;width:274px;height:44px;font-size:27.5px;">50%</div>
<div class="c" style="left:1517px;top:878px;width:219px;height:44px;font-size:27.5px;">¥300,000</div>
<div class="c" style="left:1736px;top:878px;width:305px;height:44px;font-size:27.5px;">4</div>
<svg style="left:1210px;top:894px" width="16" height="12" viewBox="0 0 16 12"><path d="M0 0H16L8 12z" fill="#1f2329"/></svg>
<div class="c" style="left:129px;top:923px;width:255px;height:44px;font-weight:bold;">总计</div>
<div class="c" style="left:384px;top:922px;width:296px;height:44px;font-size:27.5px;font-weight:bold;">3600000</div>
<div class="c" style="left:680px;top:922px;width:214px;height:44px;font-size:27.5px;font-weight:bold;">2200000</div>
<div class="c" style="left:1517px;top:922px;width:219px;height:44px;font-size:27.5px;font-weight:bold;">1400000</div>
<div class="a" style="left:2354px;top:404px;width:16px;height:86px;border-radius:8px;background:#c8c8c8"></div>
<div class="a" style="left:144px;top:1256px;width:670px;height:16px;border-radius:8px;background:#c6c6c6"></div>
<div class="a" style="left:2376px;top:385px;width:2px;height:3px;background:#1a8cf2"></div>
<div class="a" style="left:0;top:1275px;width:2378px;height:73px;background:#f4f5f7"></div>
<div class="a" style="left:0;top:1275px;width:2378px;height:1px;background:#e2e3e6"></div>
<svg style="left:52px;top:1301px" width="33" height="24" viewBox="0 0 33 24" fill="none" stroke="#1f2329" stroke-width="2.2"><path d="M0 1.5H3M9 1.5H32M0 12H3M9 12H32M0 22.5H3M9 22.5H32"/></svg>
<svg style="left:127px;top:1300px" width="26" height="26" viewBox="0 0 26 26" fill="none" stroke="#1f2329" stroke-width="2.2"><path d="M13 0V26M0 13H26"/></svg>
<div class="a" style="left:184px;top:1280px;width:182px;height:70px;background:#fff;box-shadow:0 0 4px rgba(0,0,0,0.08)"></div>
<div class="t" style="left:211px;top:1303px;font-size:25.5px;color:#1a8cf2">销售进度表</div>
<div class="a" style="left:1896px;top:1280px;width:2px;height:68px;background:#dcdde0"></div>
<div class="a" style="left:2102px;top:1280px;width:2px;height:68px;background:#dcdde0"></div>
<svg style="left:1924px;top:1300px" width="25" height="26" viewBox="0 0 25 26" fill="none" stroke="#1f2329" stroke-width="2.2"><path d="M0 12.5H24.5"/></svg>
<div class="t" style="left:1966px;top:1302px;font-size:27px;color:#1f2329">100%</div>
<svg style="left:2051px;top:1300px" width="25" height="26" viewBox="0 0 25 26" fill="none" stroke="#1f2329" stroke-width="2.2"><path d="M12.5 0V26M0 12.5H25"/></svg>
<svg style="left:2128px;top:1300px" width="33" height="28" viewBox="0 0 33 28" fill="none" stroke="#1f2329" stroke-width="2.2"><path d="M7 2H14V26H7z M2 9.5H31V15H2z" fill="#c9cacc" stroke="none"/><rect x="1.1" y="1.1" width="30.8" height="25.8" rx="2.5"/></svg>
<svg style="left:2175px;top:1310px" width="15" height="9" viewBox="0 0 15 9" fill="none" stroke="#80858b" stroke-width="1.9" stroke-linecap="round" stroke-linejoin="round"><path d="M1 1L7.5 7.8L14 1"/></svg>
<svg style="left:2222px;top:1300px" width="33" height="26" viewBox="0 0 33 26" fill="none" stroke="#1f2329" stroke-width="2.2"><rect x="1.1" y="1.1" width="30.8" height="23.8" rx="2.5"/><path d="M5 7H10M12.5 7H20M22.5 7H28M5 13H10M12.5 13H20M22.5 13H28M9 19H24"/></svg>
<svg style="left:2293px;top:1297px" width="34" height="34" viewBox="0 0 34 34" fill="none" stroke="#1f2329" stroke-width="2.2"><circle cx="17" cy="17" r="15.5"/><path d="M12.5 13a4.5 4.5 0 1 1 6.5 4c-1.3.7-2 1.6-2 3v1.5" stroke-linecap="round"/><circle cx="17" cy="25" r="1.5" fill="#1f2329" stroke="none"/></svg>
</div></body></html>
